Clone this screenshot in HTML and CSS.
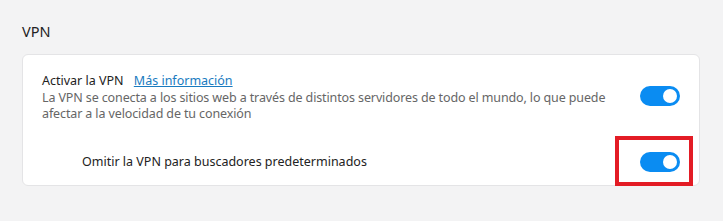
FILE: index.html
```html
<!DOCTYPE html>
<html lang="es">
<head>
<meta charset="utf-8">
<link rel="stylesheet" href="styles.css">
</head>
<body>
<main class="page">
  <h2 class="section-title">VPN</h2>
  <section class="card">
    <div class="row row-main">
      <div class="row-text">
        <div class="label">Activar la VPN <a class="link" href="#">Más información</a></div>
        <div class="desc">La VPN se conecta a los sitios web a través de distintos servidores de todo el mundo, lo que puede afectar a la velocidad de tu conexión</div>
      </div>
      <span class="toggle toggle-main"><span class="knob"></span></span>
    </div>
    <div class="row row-sub">
      <div class="label">Omitir la VPN para buscadores predeterminados</div>
      <span class="toggle-wrap">
        <span class="toggle"><span class="knob"></span></span>
        <span class="highlight"></span>
      </span>
    </div>
  </section>
</main>
</body>
</html>
```

FILE: styles.css
```css
html, body {
  margin: 0;
  padding: 0;
}
body {
  background: #f3f3f4;
  font-family: "Noto Sans", "Open Sans", sans-serif;
  color: #222;
  width: 723px;
  height: 221px;
  overflow: hidden;
}
.page {
  padding: 22px 23px 0 22px;
}
.section-title {
  margin: 0 0 14px 0;
  font-size: 14.5px;
  font-weight: 400;
  line-height: 18px;
  color: #222;
}
.card {
  background: #fff;
  border: 1px solid #e4e4e6;
  border-radius: 6px;
  padding: 0 19px;
  box-sizing: border-box;
  width: 678px;
  height: 132px;
}
.row {
  display: flex;
  align-items: center;
  justify-content: space-between;
}
.row-main {
  padding-top: 18px;
  height: 50px;
}
.row-text {
  width: 580px;
}
.label {
  font-size: 12.5px;
  line-height: 16.5px;
  color: #222;
}
.link {
  color: #1a7bbf;
  margin-left: 7px;
  text-decoration: underline;
}
.desc {
  font-size: 12.5px;
  line-height: 16.5px;
  letter-spacing: -0.12px;
  color: #666;
}
.row-sub {
  margin-top: 24px;
  height: 30px;
  padding-left: 40px;
}
.toggle {
  display: flex;
  align-items: center;
  justify-content: flex-end;
  width: 40px;
  height: 20px;
  border-radius: 10px;
  background: #0a8cf2;
  padding: 0 3px;
  box-sizing: border-box;
  flex: none;
}
.toggle-main {
  margin-bottom: 4px;
}
.knob {
  width: 14px;
  height: 14px;
  border-radius: 50%;
  background: #fff;
}
.toggle-wrap {
  position: relative;
  display: block;
}
.highlight {
  position: absolute;
  left: -25px;
  top: -16px;
  width: 78px;
  height: 50px;
  box-sizing: border-box;
  border: 4px solid #e31c25;
}
```
